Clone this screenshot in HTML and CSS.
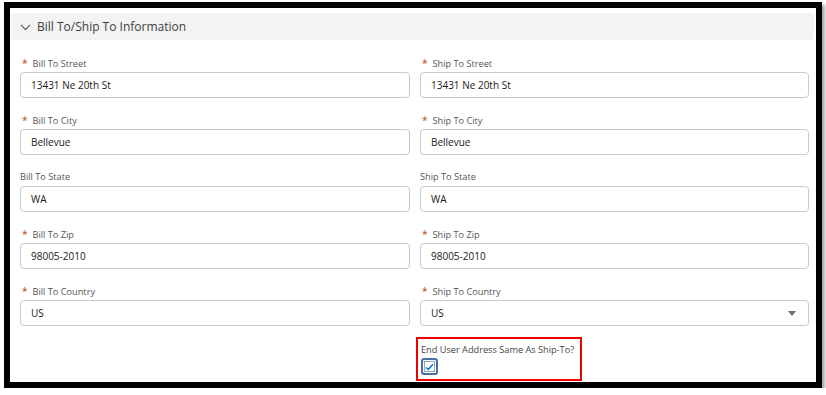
FILE: index.html
```html
<!DOCTYPE html>
<html lang="en">
<head>
    <meta charset="UTF-8">
    <meta name="viewport" content="width=device-width, initial-scale=1.0">
    <title>Bill To / Ship To</title>
    <link rel="stylesheet" href="styles.css">
</head>
<body>

    <div class="frame">
        <div class="section-header">
            <svg class="chevron" width="11" height="7" viewBox="0 0 11 7">
                <path d="M1 1 L5.5 5.5 L10 1" fill="none" stroke="#706e6b" stroke-width="1.3"/>
            </svg>
            <span>Bill To/Ship To Information</span>
        </div>

        <div class="form-grid">
            <div class="field">
                <label><span class="req">*</span>Bill To Street</label>
                <div class="input">13431 Ne 20th St</div>
            </div>
            <div class="field">
                <label><span class="req">*</span>Ship To Street</label>
                <div class="input">13431 Ne 20th St</div>
            </div>

            <div class="field">
                <label><span class="req">*</span>Bill To City</label>
                <div class="input">Bellevue</div>
            </div>
            <div class="field">
                <label><span class="req">*</span>Ship To City</label>
                <div class="input">Bellevue</div>
            </div>

            <div class="field">
                <label>Bill To State</label>
                <div class="input">WA</div>
            </div>
            <div class="field">
                <label>Ship To State</label>
                <div class="input">WA</div>
            </div>

            <div class="field">
                <label><span class="req">*</span>Bill To Zip</label>
                <div class="input">98005-2010</div>
            </div>
            <div class="field">
                <label><span class="req">*</span>Ship To Zip</label>
                <div class="input">98005-2010</div>
            </div>

            <div class="field">
                <label><span class="req">*</span>Bill To Country</label>
                <div class="input">US</div>
            </div>
            <div class="field">
                <label><span class="req">*</span>Ship To Country</label>
                <div class="input select">
                    <span>US</span>
                    <span class="caret"></span>
                </div>
            </div>

            <div class="field empty"></div>
            <div class="field">
                <div class="highlight">
                    <div class="check-label">End User Address Same As Ship-To?</div>
                    <div class="checkbox">
                        <svg width="9" height="8" viewBox="0 0 9 8">
                            <path d="M1 4.5 L3.3 6.5 L8 1.2" fill="none" stroke="#0176d3" stroke-width="1.6"/>
                        </svg>
                    </div>
                </div>
            </div>
        </div>
    </div>

</body>
</html>
```

FILE: styles.css
```css
body {
    margin: 0;
    background-color: white;
    font-family: "Open Sans", "Noto Sans", sans-serif;
    color: #181818;
}

.frame {
    margin: 2px 0 0 4px;
    width: 806px;
    height: 374px;
    border: 6px solid #000;
    box-shadow: 3px 3px 3px rgba(0, 0, 0, 0.35);
    background-color: white;
}

.section-header {
    margin: 5px 2px 0 1px;
    height: 27px;
    background-color: #f3f3f3;
    border-radius: 4px;
    display: flex;
    align-items: center;
    gap: 6px;
    padding-left: 9px;
    font-size: 12px;
    color: #3e3e3c;
}

.chevron {
    margin-top: 1px;
}

.form-grid {
    display: grid;
    grid-template-columns: 390px 389px;
    column-gap: 10px;
    row-gap: 15px;
    padding: 16px 7px 0 10px;
}

.field label {
    display: block;
    height: 14px;
    line-height: 14px;
    margin-bottom: 2px;
    font-size: 9.2px;
    color: #555;
}

.req {
    color: #c23934;
    font-size: 10px;
    margin: 0 5px 0 2px;
}

.input {
    height: 24px;
    border: 1px solid #c9c9c9;
    border-radius: 4px;
    display: flex;
    align-items: center;
    padding: 0 10px;
    font-size: 10px;
    color: #181818;
}

.select {
    justify-content: space-between;
}

.caret {
    width: 0;
    height: 0;
    border-left: 4px solid transparent;
    border-right: 4px solid transparent;
    border-top: 5px solid #706e6b;
    margin-right: 2px;
}

.highlight {
    margin: -4px 0 0 -4px;
    width: 162px;
    height: 40px;
    border: 2px solid #f00000;
}

.check-label {
    font-size: 9.2px;
    color: #444;
    margin: 5px 0 0 3px;
    line-height: 12px;
}

.checkbox {
    margin: 2px 0 0 3px;
    width: 13px;
    height: 13px;
    border: 2px solid #4a6fa5;
    border-radius: 3px;
    box-shadow: inset 0 0 0 1px #fff, inset 0 0 0 2px #8aa4c8;
    display: flex;
    align-items: center;
    justify-content: center;
}
```
